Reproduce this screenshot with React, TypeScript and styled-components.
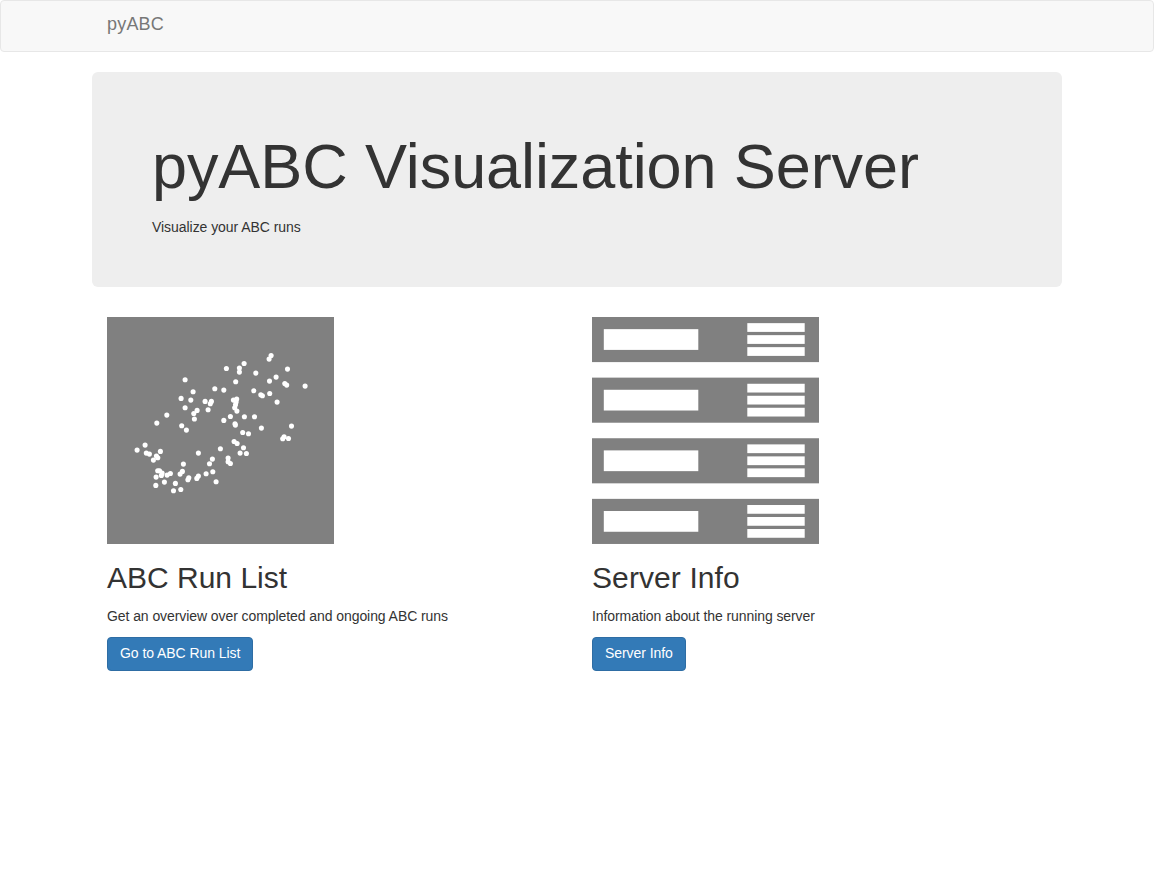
import React from "react";
import styled, { createGlobalStyle } from "styled-components";

const GlobalStyle = createGlobalStyle`
  *, *::before, *::after { box-sizing: border-box; }
  body {
    margin: 0;
    background: #fff;
    color: #333;
    font-family: "Nimbus Sans", "Nimbus Sans L", "Liberation Sans", Arial, sans-serif;
    font-size: 14px;
    line-height: 20px;
  }
`;

const Navbar = styled.nav`
  height: 52px;
  margin-bottom: 20px;
  border: 1px solid #e7e7e7;
  border-radius: 4px;
  background: #f8f8f8;
`;

const Container = styled.div`
  width: 970px;
  margin: 0 auto;
`;

const Brand = styled.a`
  display: block;
  width: max-content;
  padding: 13px 15px 17px;
  color: #777;
  font-size: 18px;
  line-height: 20px;
  letter-spacing: 0.2px;
  text-decoration: none;
`;

const Jumbotron = styled.header`
  height: 215px;
  margin-bottom: 30px;
  padding: 60px 60px 0;
  border-radius: 6px;
  background: #eee;
`;

const Title = styled.h1`
  margin: 0 0 16px;
  font-size: 63px;
  font-weight: 500;
  line-height: 69px;
  letter-spacing: -0.09px;
  white-space: nowrap;
`;

const Text = styled.p<{ $spacing?: number }>`
  margin: 0;
  letter-spacing: ${(p) => p.$spacing ?? 0}px;
  white-space: nowrap;
`;

const Columns = styled.main`
  display: grid;
  grid-template-columns: 1fr 1fr;
`;

const Card = styled.section`
  display: flex;
  flex-direction: column;
  align-items: flex-start;
  padding: 0 15px;
`;

const Picture = styled.svg`
  display: block;
  width: 227px;
  height: 227px;
`;

const Heading = styled.h2<{ $spacing?: number }>`
  margin: 17px 0 12px;
  font-size: 30px;
  font-weight: 500;
  line-height: 33px;
  letter-spacing: ${(p) => p.$spacing ?? 0}px;
`;

const Button = styled.a<{ $width: number }>`
  width: ${(p) => p.$width}px;
  height: 34px;
  margin-top: 11px;
  padding: 5px 0 7px 12px;
  border: 1px solid #2e6da4;
  border-radius: 4px;
  background: #337ab7;
  color: #fff;
  letter-spacing: -0.06px;
  text-decoration: none;
  white-space: nowrap;
`;

const points: [number, number][] = [
  [78, 62.7], [86, 74.7], [107.7, 71.7], [116.7, 73], [74, 81.3], [83.7, 83],
  [98, 84.3], [104.3, 84.3], [103.2, 86.6], [78, 90.7], [101, 92.7], [90, 93.3],
  [86.7, 96.4], [59.7, 98], [87.3, 101.9], [164, 38.4], [162, 42], [137, 46.4],
  [119.3, 51.4], [132.3, 51], [132.3, 55], [180.4, 52], [148.7, 56], [128.6, 64.6],
  [162.4, 64], [169, 60], [177.7, 66.4], [179.6, 68], [198, 69], [146.7, 73.7],
  [153.7, 77.7], [155.3, 78.7], [162.6, 76.4], [170, 85], [126.3, 83], [129.6, 82],
  [129, 85], [128.4, 87.6], [127.6, 90.7], [129.8, 94], [123.3, 99.4], [137.3, 99.7],
  [147.4, 99.7], [116.7, 103.3], [49.7, 106], [74.6, 108.7], [79.3, 113], [38, 128],
  [30, 133], [39.2, 136], [42.3, 137], [53.3, 134.3], [49.3, 139], [50.7, 140.6],
  [46.3, 143], [91.3, 136], [113.3, 131.7], [76.3, 147], [105.3, 142], [102.4, 146.7],
  [50.6, 153.7], [52.4, 153.7], [55, 156], [54.3, 158.3], [49, 160], [60, 158],
  [63.3, 156.4], [75.3, 154.3], [73, 157], [81.7, 160.7], [80.8, 162.6], [91.3, 159],
  [89.7, 161.3], [99, 156.7], [105.7, 154.7], [109, 164.7], [57.3, 165], [48.7, 168.3],
  [68.3, 166.3], [66.4, 173.7], [73.7, 172.4], [127.9, 106.8], [128.3, 108], [154.3, 111],
  [184.4, 109], [135.6, 115.4], [141.4, 116.7], [177, 119.6], [175.6, 121.6], [181.4, 121.4],
  [127, 124.4], [130, 126.4], [136.4, 130.7], [133, 136], [139.3, 136.4], [121, 141],
  [121, 144.6], [123.3, 146.4],
];

const ScatterPicture = () => (
  <Picture viewBox="0 0 227 227" aria-hidden="true">
    <rect width="227" height="227" fill="#808080" />
    {points.map(([x, y]) => (
      <circle key={`${x}-${y}`} cx={x + 0.1} cy={y + 0.1} r="2.55" fill="#fff" />
    ))}
  </Picture>
);

const ServerPicture = () => (
  <Picture viewBox="0 0 227 227" aria-hidden="true">
    {[0, 60.62, 121.24, 181.86].map((y) => (
      <g key={y} transform={`translate(0 ${y})`}>
        <rect width="227" height="45.1" fill="#808080" />
        <rect x="11.8" y="12.15" width="94.5" height="20.75" fill="#fff" />
        {[6.15, 18.15, 30.15].map((slot) => (
          <rect key={slot} x="155.3" y={slot} width="57.4" height="8.75" fill="#fff" />
        ))}
      </g>
    ))}
  </Picture>
);

export default function App() {
  return (
    <>
      <GlobalStyle />
      <Navbar>
        <Container>
          <Brand>pyABC</Brand>
        </Container>
      </Navbar>
      <Container>
        <Jumbotron>
          <Title>pyABC Visualization Server</Title>
          <Text $spacing={-0.05}>Visualize your ABC runs</Text>
        </Jumbotron>
        <Columns>
          <Card>
            <ScatterPicture />
            <Heading>ABC Run List</Heading>
            <Text $spacing={-0.075}>Get an overview over completed and ongoing ABC runs</Text>
            <Button $width={146}>Go to ABC Run List</Button>
          </Card>
          <Card>
            <ServerPicture />
            <Heading $spacing={0.1}>Server Info</Heading>
            <Text $spacing={-0.08}>Information about the running server</Text>
            <Button $width={94}>Server Info</Button>
          </Card>
        </Columns>
      </Container>
    </>
  );
}
